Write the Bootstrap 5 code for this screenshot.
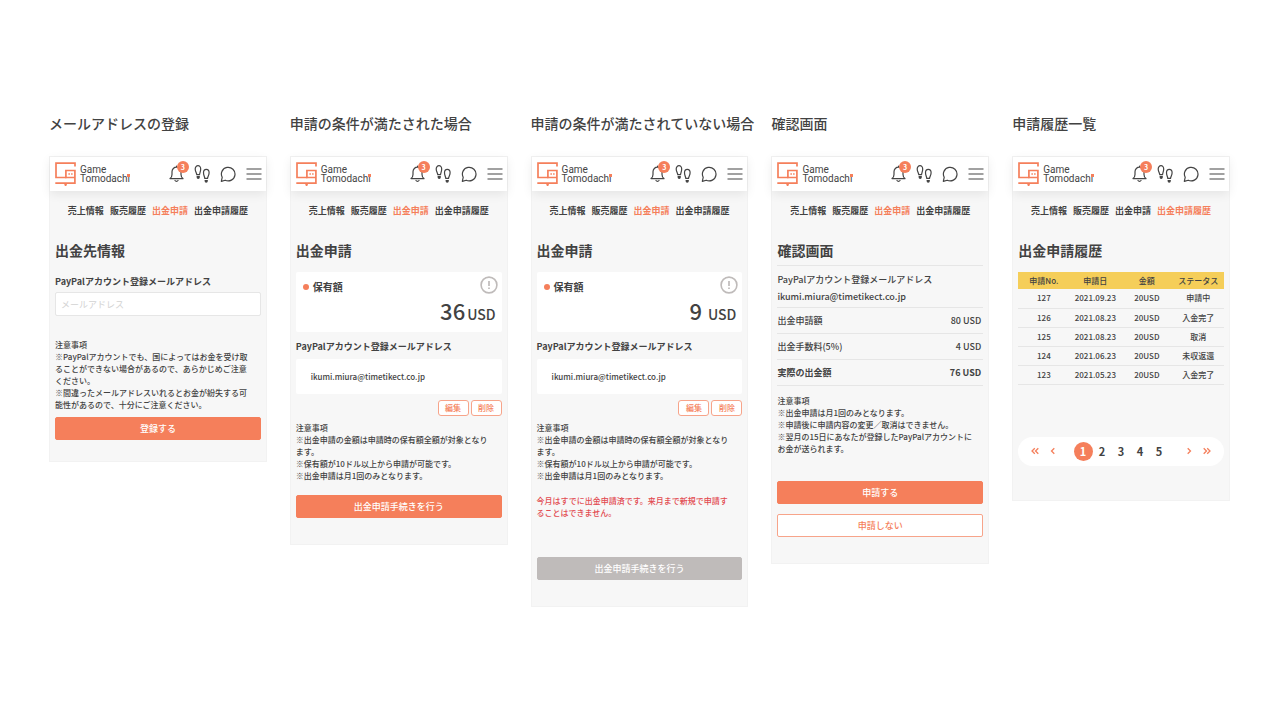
<!DOCTYPE html>
<html lang="ja">
<head>
<meta charset="utf-8">
<meta name="viewport" content="width=device-width, initial-scale=1">
<title>Game Tomodachi 出金申請</title>
<link href="https://cdn.jsdelivr.net/npm/bootstrap@5.3.0/dist/css/bootstrap.min.css" rel="stylesheet">
<style>
:root{--gt-orange:#f57f5b;--gt-ink:#424242;--gt-line:#e6e6e6}
body{font-family:"Noto Sans CJK JP",sans-serif;color:var(--gt-ink);font-size:9px;line-height:12px;font-weight:500;background:#fff}
.board{padding:111px 50px 48px 49px;display:grid;grid-template-columns:repeat(5,minmax(0,1fr));column-gap:23px;align-items:start}
.board-title{font-size:14px;line-height:24px;font-weight:500;margin:0 0 21px}
.phone{background:#f7f7f7;border:1px solid #f2f2f2;padding-bottom:26px}
.phone-short{padding-bottom:21px}
.phone-tall{padding-bottom:34px}
.phone-head{height:34px;padding:0 4px 0 5px;background:#fff;box-shadow:0 3px 10px rgba(0,0,0,.08)}
.brand-link{color:#444;text-decoration:none}
.brand-name{font:400 10px/9px Roboto,sans-serif;margin-left:4px}
.brand-name i{font-style:normal;position:relative}
.brand-name i::after{content:"";position:absolute;left:0;top:1px;width:3px;height:3px;background:var(--gt-orange)}
.tools{gap:10px}
.tool{border:0;background:none;padding:0;position:relative;display:block;width:16px;height:18px;color:#444}
.tool svg{display:block}
.count{position:absolute;left:9px;top:-4px;width:12px;height:12px;border-radius:50%;background:var(--gt-orange);color:#fff;font-size:7px;line-height:12px;font-weight:700;text-align:center}
.tabs{margin-top:14px;gap:6px;font-weight:700}
.tabs a{color:var(--gt-ink);text-decoration:none}
.tabs a.active{color:var(--gt-orange)}
.screen{padding:23px 5px 0}
.screen-title{font-size:14px;line-height:20px;font-weight:700;margin:0}
.field-label{display:block;font-weight:700;line-height:14px;margin:8px 0 5px}
.field-label-top{margin:15px 0 3px}
.mail{height:24px;border:1px solid var(--gt-line);border-radius:2px;padding:0 5px;font-size:9px;line-height:14px}
.mail::placeholder{color:#d3d3d3;opacity:1}
.notes{font-size:8px;line-height:12px;margin:0;white-space:nowrap}
.warn{color:#e24a50}
.space-s{margin-top:6px}
.space-m{margin-top:9px}
.space-l{margin-top:13px}
.space-xl{margin-top:23px}
.space-xxl{margin-top:38px}
.wide{display:block;width:100%;height:23px;padding:0;border-radius:2px;font-size:9px;line-height:21px;font-weight:500}
.btn-gt{--bs-btn-color:#fff;--bs-btn-bg:var(--gt-orange);--bs-btn-border-color:var(--gt-orange);--bs-btn-hover-color:#fff;--bs-btn-hover-bg:#e96f4a;--bs-btn-disabled-color:#fff;--bs-btn-disabled-bg:#bfbbba;--bs-btn-disabled-border-color:#bfbbba;--bs-btn-disabled-opacity:1}
.btn-gt-line{--bs-btn-color:var(--gt-orange);--bs-btn-bg:#fff;--bs-btn-border-color:#f7a48a;--bs-btn-hover-color:#fff;--bs-btn-hover-bg:var(--gt-orange)}
.mini-row{gap:2px}
.mini{width:31px;height:16px;padding:0;font-size:8px;line-height:14px;border-radius:3px;font-weight:500}
.panel{background:#fff;border-radius:2px}
.balance{height:60px;margin-top:12px;padding:4px 6px 5px 7px}
.balance-name{font-size:10px;font-weight:700;gap:4px}
.balance-icon{margin-right:-2px}
.bullet{width:6px;height:6px;border-radius:50%;background:var(--gt-orange)}
.amount{font-size:22px;line-height:26px}
.amount small{font-size:14px}
.amount-pair{gap:2px}
.amount-single{gap:6px}
.account{height:35px;padding-left:15px;font-size:8px}
.sheet{margin:5px 0 0}
.sheet>div{border-bottom:1px solid var(--gt-line)}
.sheet>div:first-child{border-top:1px solid var(--gt-line);line-height:17px;padding:5px 0 2px}
.sheet dt,.sheet dd{font-weight:inherit;margin:0}
.sheet .pay-line{height:26px;padding-right:2px}
.send{margin-top:26px}
.skip{margin-top:10px}
.history{table-layout:fixed;width:100%;margin:12px 0 0;font-size:8px;line-height:12px;text-align:center}
.history th{height:17px;padding:0;background:#f5ce59;font-weight:500}
.history td{height:19px;padding:0;border-bottom:1px solid var(--gt-line)}
.pager{height:29px;margin:52px 0 0;padding:0 8px;border-radius:15px;background:#fff;font-size:11px;font-weight:700}
.pager a{display:flex;align-items:center;justify-content:center;width:19px;height:19px;color:var(--gt-ink);text-decoration:none}
.pager .now{border-radius:50%;background:var(--gt-orange);color:#fff}
.pager .step{width:18px}
</style>
</head>
<body>
<svg class="d-none" aria-hidden="true">
  <symbol id="logo" viewBox="0 0 21 24"><g fill="none" stroke="#f57f5b" stroke-width="1.7"><path d="M20 4.600V1.200H1v14.300h10.500"/><path d="M19.900 15.500h-9V8.500h9v12.700H0.300"/></g><path fill="#f57f5b" d="M9.300 21h2.600v1.600l-.6 1.400h-1.400l-.6-1.400zM13.400 11.200h1.500v1.500h-1.500zM16.100 11.200h1.500v1.500h-1.500z"/></symbol>
  <symbol id="bell" viewBox="0 0 16 18"><path d="M2 13.600c1.200-.8 2-2.200 2-4V6.700a4.500 4.500 0 0 1 9 0v2.900c0 1.800.8 3.200 2 4zM8.500 2.200V1M7 15.500a1.800 1.800 0 0 0 3 0" fill="none" stroke="currentColor" stroke-width="1.200" stroke-linejoin="round" stroke-linecap="round"/></symbol>
  <symbol id="steps" viewBox="0 0 16 18"><g fill="none" stroke="currentColor" stroke-width="1.200"><path d="M2.800 9.700C2.600 8 1.200 6.400 1.200 4 1.200 2 2.500.7 4 .7s2.700 1.300 2.700 3.300c0 2.300-1 4-1.200 5.700z"/><path d="M10.800 13.400c-.2-1.700-1.300-3.400-1.300-5.700 0-2 1.300-3.300 2.800-3.300s2.800 1.300 2.800 3.300c0 2.300-1.400 4-1.600 5.700z"/><path d="M3.200 11.700h2v.6a1 1 0 0 1-2 0zM11.200 15.500h2v.6a1 1 0 0 1-2 0z" fill="currentColor"/></g></symbol>
  <symbol id="chat" viewBox="0 0 16 18"><path d="M1.300 16.400 2.200 12.300A6.800 6.800 0 1 1 5.200 15.200z" fill="none" stroke="currentColor" stroke-width="1.200" stroke-linejoin="round"/></symbol>
  <symbol id="menu" viewBox="0 0 16 18"><path d="M.5 4h15M.5 9h15M.5 14h15" stroke="currentColor" stroke-width="1.200"/></symbol>
  <symbol id="info" viewBox="0 0 18 18"><circle cx="9" cy="9" r="7.900" fill="none" stroke="#bfbbba" stroke-width="1.600"/><path d="M9 5v5M9 11.500v1.600" stroke="#bfbbba" stroke-width="1.700"/></symbol>
  <symbol id="prev" viewBox="0 0 6 8"><path d="M4.300 1.200 1.500 4l2.800 2.800" fill="none" stroke="#f57f5b" stroke-width="1.300"/></symbol>
  <symbol id="next" viewBox="0 0 6 8"><path d="M1.700 1.200 4.500 4 1.700 6.800" fill="none" stroke="#f57f5b" stroke-width="1.300"/></symbol>
  <symbol id="first" viewBox="0 0 8 8"><path d="M3.800 1.200 1 4l2.800 2.800M7.300 1.200 4.500 4l2.800 2.800" fill="none" stroke="#f57f5b" stroke-width="1.300"/></symbol>
  <symbol id="last" viewBox="0 0 8 8"><path d="M.7 1.200 3.500 4 .7 6.800M4.200 1.200 7 4 4.200 6.800" fill="none" stroke="#f57f5b" stroke-width="1.300"/></symbol>
</svg>
<main class="board">

<section>
  <h2 class="board-title text-nowrap">メールアドレスの登録</h2>
  <div class="phone phone-short">
    <header class="phone-head d-flex align-items-center justify-content-between">
      <a href="#" class="brand-link d-flex align-items-center"><svg width="21" height="24"><use href="#logo"/></svg><span class="brand-name">Game<br>Tomodach<i>i</i></span></a>
      <div class="tools d-flex"><button class="tool" aria-label="通知"><svg width="16" height="18"><use href="#bell"/></svg><span class="count">3</span></button><button class="tool" aria-label="足あと"><svg width="16" height="18"><use href="#steps"/></svg></button><button class="tool" aria-label="メッセージ"><svg width="16" height="18"><use href="#chat"/></svg></button><button class="tool" aria-label="メニュー"><svg width="16" height="18"><use href="#menu"/></svg></button></div>
    </header>
    <nav class="tabs d-flex justify-content-center text-nowrap"><a href="#">売上情報</a><a href="#">販売履歴</a><a href="#" class="active">出金申請</a><a href="#">出金申請履歴</a></nav>
    <div class="screen">
      <h3 class="screen-title">出金先情報</h3>
      <label class="field-label field-label-top" for="mail">PayPalアカウント登録メールアドレス</label>
      <input class="form-control mail" id="mail" type="email" placeholder="メールアドレス">
      <p class="notes space-xl">注意事項<br>※PayPalアカウントでも、国によってはお金を受け取<br>ることができない場合があるので、あらかじめご注意<br>ください。<br>※間違ったメールアドレスいれるとお金が紛失する可<br>能性があるので、十分にご注意ください。</p>
      <button class="btn btn-gt wide space-s">登録する</button>
    </div>
  </div>
</section>

<section>
  <h2 class="board-title text-nowrap">申請の条件が満たされた場合</h2>
  <div class="phone">
    <header class="phone-head d-flex align-items-center justify-content-between">
      <a href="#" class="brand-link d-flex align-items-center"><svg width="21" height="24"><use href="#logo"/></svg><span class="brand-name">Game<br>Tomodach<i>i</i></span></a>
      <div class="tools d-flex"><button class="tool" aria-label="通知"><svg width="16" height="18"><use href="#bell"/></svg><span class="count">3</span></button><button class="tool" aria-label="足あと"><svg width="16" height="18"><use href="#steps"/></svg></button><button class="tool" aria-label="メッセージ"><svg width="16" height="18"><use href="#chat"/></svg></button><button class="tool" aria-label="メニュー"><svg width="16" height="18"><use href="#menu"/></svg></button></div>
    </header>
    <nav class="tabs d-flex justify-content-center text-nowrap"><a href="#">売上情報</a><a href="#">販売履歴</a><a href="#" class="active">出金申請</a><a href="#">出金申請履歴</a></nav>
    <div class="screen">
      <h3 class="screen-title">出金申請</h3>
      <div class="panel balance d-flex flex-column justify-content-between">
        <div class="d-flex justify-content-between">
          <div class="balance-name d-flex align-items-center mt-1"><span class="bullet"></span>保有額</div>
          <svg class="balance-icon" width="18" height="18"><use href="#info"/></svg>
        </div>
        <div class="amount amount-pair d-flex justify-content-end align-items-baseline"><span>36</span><small>USD</small></div>
      </div>
      <div class="field-label">PayPalアカウント登録メールアドレス</div>
      <div class="panel account d-flex align-items-center">ikumi.miura@timetikect.co.jp</div>
      <div class="mini-row d-flex justify-content-end space-s"><button class="btn btn-gt-line mini">編集</button><button class="btn btn-gt-line mini">削除</button></div>
      <p class="notes space-s">注意事項<br>※出金申請の金額は申請時の保有額全額が対象となり<br>ます。<br>※保有額が10ドル以上から申請が可能です。<br>※出金申請は月1回のみとなります。</p>
      <button class="btn btn-gt wide space-l">出金申請手続きを行う</button>
    </div>
  </div>
</section>

<section>
  <h2 class="board-title text-nowrap">申請の条件が満たされていない場合</h2>
  <div class="phone">
    <header class="phone-head d-flex align-items-center justify-content-between">
      <a href="#" class="brand-link d-flex align-items-center"><svg width="21" height="24"><use href="#logo"/></svg><span class="brand-name">Game<br>Tomodach<i>i</i></span></a>
      <div class="tools d-flex"><button class="tool" aria-label="通知"><svg width="16" height="18"><use href="#bell"/></svg><span class="count">3</span></button><button class="tool" aria-label="足あと"><svg width="16" height="18"><use href="#steps"/></svg></button><button class="tool" aria-label="メッセージ"><svg width="16" height="18"><use href="#chat"/></svg></button><button class="tool" aria-label="メニュー"><svg width="16" height="18"><use href="#menu"/></svg></button></div>
    </header>
    <nav class="tabs d-flex justify-content-center text-nowrap"><a href="#">売上情報</a><a href="#">販売履歴</a><a href="#" class="active">出金申請</a><a href="#">出金申請履歴</a></nav>
    <div class="screen">
      <h3 class="screen-title">出金申請</h3>
      <div class="panel balance d-flex flex-column justify-content-between">
        <div class="d-flex justify-content-between">
          <div class="balance-name d-flex align-items-center mt-1"><span class="bullet"></span>保有額</div>
          <svg class="balance-icon" width="18" height="18"><use href="#info"/></svg>
        </div>
        <div class="amount amount-single d-flex justify-content-end align-items-baseline"><span>9</span><small>USD</small></div>
      </div>
      <div class="field-label">PayPalアカウント登録メールアドレス</div>
      <div class="panel account d-flex align-items-center">ikumi.miura@timetikect.co.jp</div>
      <div class="mini-row d-flex justify-content-end space-s"><button class="btn btn-gt-line mini">編集</button><button class="btn btn-gt-line mini">削除</button></div>
      <p class="notes space-s">注意事項<br>※出金申請の金額は申請時の保有額全額が対象となり<br>ます。<br>※保有額が10ドル以上から申請が可能です。<br>※出金申請は月1回のみとなります。</p>
      <p class="notes warn space-l">今月はすでに出金申請済です。来月まで新規で申請す<br>ることはできません。</p>
      <button class="btn btn-gt wide space-xxl" disabled>出金申請手続きを行う</button>
    </div>
  </div>
</section>

<section>
  <h2 class="board-title text-nowrap">確認画面</h2>
  <div class="phone">
    <header class="phone-head d-flex align-items-center justify-content-between">
      <a href="#" class="brand-link d-flex align-items-center"><svg width="21" height="24"><use href="#logo"/></svg><span class="brand-name">Game<br>Tomodach<i>i</i></span></a>
      <div class="tools d-flex"><button class="tool" aria-label="通知"><svg width="16" height="18"><use href="#bell"/></svg><span class="count">3</span></button><button class="tool" aria-label="足あと"><svg width="16" height="18"><use href="#steps"/></svg></button><button class="tool" aria-label="メッセージ"><svg width="16" height="18"><use href="#chat"/></svg></button><button class="tool" aria-label="メニュー"><svg width="16" height="18"><use href="#menu"/></svg></button></div>
    </header>
    <nav class="tabs d-flex justify-content-center text-nowrap"><a href="#">売上情報</a><a href="#">販売履歴</a><a href="#" class="active">出金申請</a><a href="#">出金申請履歴</a></nav>
    <div class="screen">
      <h3 class="screen-title">確認画面</h3>
      <dl class="sheet">
        <div><dt>PayPalアカウント登録メールアドレス</dt><dd>ikumi.miura@timetikect.co.jp</dd></div>
        <div class="pay-line d-flex justify-content-between align-items-center"><dt>出金申請額</dt><dd>80 USD</dd></div>
        <div class="pay-line d-flex justify-content-between align-items-center"><dt>出金手数料(5%)</dt><dd>4 USD</dd></div>
        <div class="pay-line d-flex justify-content-between align-items-center fw-bold"><dt>実際の出金額</dt><dd>76 USD</dd></div>
      </dl>
      <p class="notes space-m">注意事項<br>※出金申請は月1回のみとなります。<br>※申請後に申請内容の変更／取消はできません。<br>※翌月の15日にあなたが登録したPayPalアカウントに<br>お金が送られます。</p>
      <button class="btn btn-gt wide send">申請する</button>
      <button class="btn btn-gt-line wide skip">申請しない</button>
    </div>
  </div>
</section>

<section>
  <h2 class="board-title text-nowrap">申請履歴一覧</h2>
  <div class="phone phone-tall">
    <header class="phone-head d-flex align-items-center justify-content-between">
      <a href="#" class="brand-link d-flex align-items-center"><svg width="21" height="24"><use href="#logo"/></svg><span class="brand-name">Game<br>Tomodach<i>i</i></span></a>
      <div class="tools d-flex"><button class="tool" aria-label="通知"><svg width="16" height="18"><use href="#bell"/></svg><span class="count">3</span></button><button class="tool" aria-label="足あと"><svg width="16" height="18"><use href="#steps"/></svg></button><button class="tool" aria-label="メッセージ"><svg width="16" height="18"><use href="#chat"/></svg></button><button class="tool" aria-label="メニュー"><svg width="16" height="18"><use href="#menu"/></svg></button></div>
    </header>
    <nav class="tabs d-flex justify-content-center text-nowrap"><a href="#">売上情報</a><a href="#">販売履歴</a><a href="#">出金申請</a><a href="#" class="active">出金申請履歴</a></nav>
    <div class="screen">
      <h3 class="screen-title">出金申請履歴</h3>
      <table class="history">
        <thead><tr><th>申請No.</th><th>申請日</th><th>金額</th><th>ステータス</th></tr></thead>
        <tbody>
          <tr><td>127</td><td>2021.09.23</td><td>20USD</td><td>申請中</td></tr>
          <tr><td>126</td><td>2021.08.23</td><td>20USD</td><td>入金完了</td></tr>
          <tr><td>125</td><td>2021.08.23</td><td>20USD</td><td>取消</td></tr>
          <tr><td>124</td><td>2021.06.23</td><td>20USD</td><td>未収返還</td></tr>
          <tr><td>123</td><td>2021.05.23</td><td>20USD</td><td>入金完了</td></tr>
        </tbody>
      </table>
      <nav class="pager d-flex align-items-center justify-content-between" aria-label="ページ">
        <div class="d-flex"><a href="#" class="step" aria-label="最初"><svg width="8" height="8"><use href="#first"/></svg></a><a href="#" class="step" aria-label="前"><svg width="6" height="8"><use href="#prev"/></svg></a></div>
        <div class="d-flex"><a href="#" class="now">1</a><a href="#">2</a><a href="#">3</a><a href="#">4</a><a href="#">5</a></div>
        <div class="d-flex"><a href="#" class="step" aria-label="次"><svg width="6" height="8"><use href="#next"/></svg></a><a href="#" class="step" aria-label="最後"><svg width="8" height="8"><use href="#last"/></svg></a></div>
      </nav>
    </div>
  </div>
</section>
</main>
<script src="https://cdn.jsdelivr.net/npm/bootstrap@5.3.0/dist/js/bootstrap.bundle.min.js"></script>
</body>
</html>
